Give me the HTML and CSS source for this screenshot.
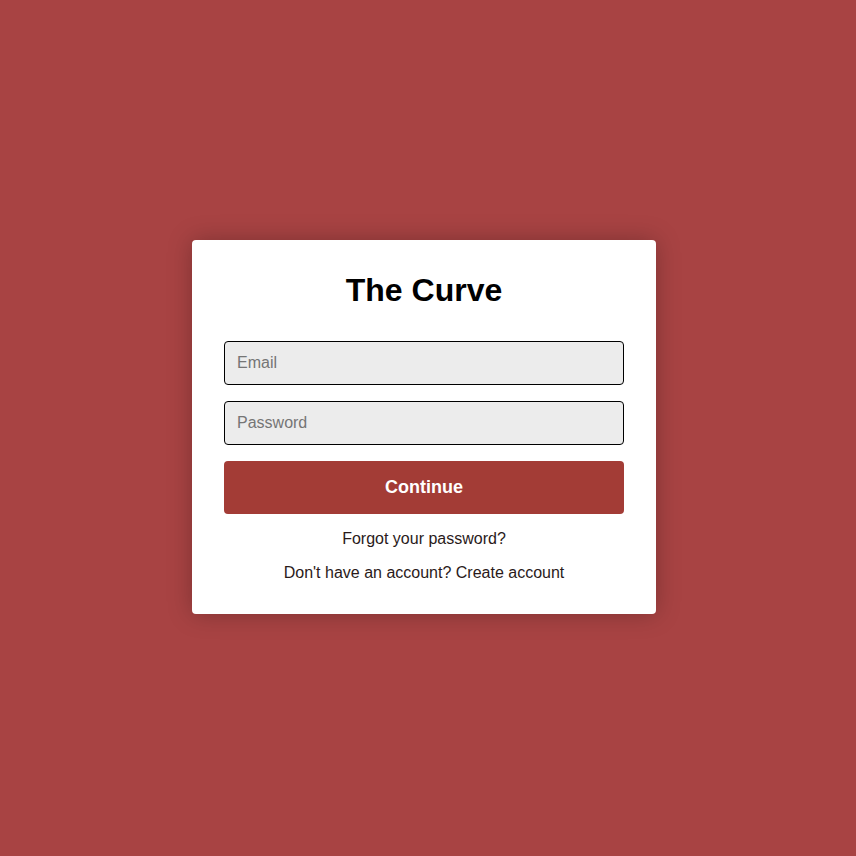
FILE: index.html
```html
<!DOCTYPE html>
<html>
<head>
<meta charset="utf-8">
<link rel="stylesheet" href="styles.css">
</head>
<body>
<div class="page">
  <form class="card">
    <h1 class="title">The Curve</h1>
    <input class="field" type="email" placeholder="Email">
    <input class="field" type="password" placeholder="Password">
    <button class="btn" type="button">Continue</button>
    <p class="link">Forgot your password?</p>
    <p class="link">Don't have an account? Create account</p>
  </form>
</div>
</body>
</html>
```
FILE: styles.css
```css
html, body {
  margin: 0;
  padding: 0;
  height: 100%;
}
body {
  background: #a84343;
  font-family: "Liberation Sans", Arial, sans-serif;
}
.page {
  min-height: 100vh;
  display: flex;
  align-items: center;
  justify-content: center;
  padding-right: 8px;
}
.card {
  width: 400px;
  background: #fff;
  border-radius: 4px;
  padding: 32px;
  display: flex;
  flex-direction: column;
  box-shadow: 0 0 24px rgba(0,0,0,0.25);
  margin-top: -2px;
}
.title {
  margin: 0 0 32px;
  font-size: 32px;
  font-weight: bold;
  text-align: center;
  color: #000;
  line-height: 37px;
}
.field {
  display: block;
  box-sizing: border-box;
  width: 100%;
  height: 44px;
  margin: 0 0 16px;
  padding: 0 12px;
  font-family: inherit;
  font-size: 16px;
  background: #ececec;
  border: 1px solid #000;
  border-radius: 4px;
  color: #222;
  outline: none;
}
.field::placeholder {
  color: #757575;
}
.btn {
  height: 53px;
  border: none;
  border-radius: 4px;
  background: #a33c36;
  color: #fff;
  font-family: inherit;
  font-size: 18px;
  font-weight: bold;
  cursor: pointer;
}
.link {
  margin: 15px 0 0;
  text-align: center;
  font-size: 16px;
  line-height: 19px;
  color: #2a1a1a;
}
```
